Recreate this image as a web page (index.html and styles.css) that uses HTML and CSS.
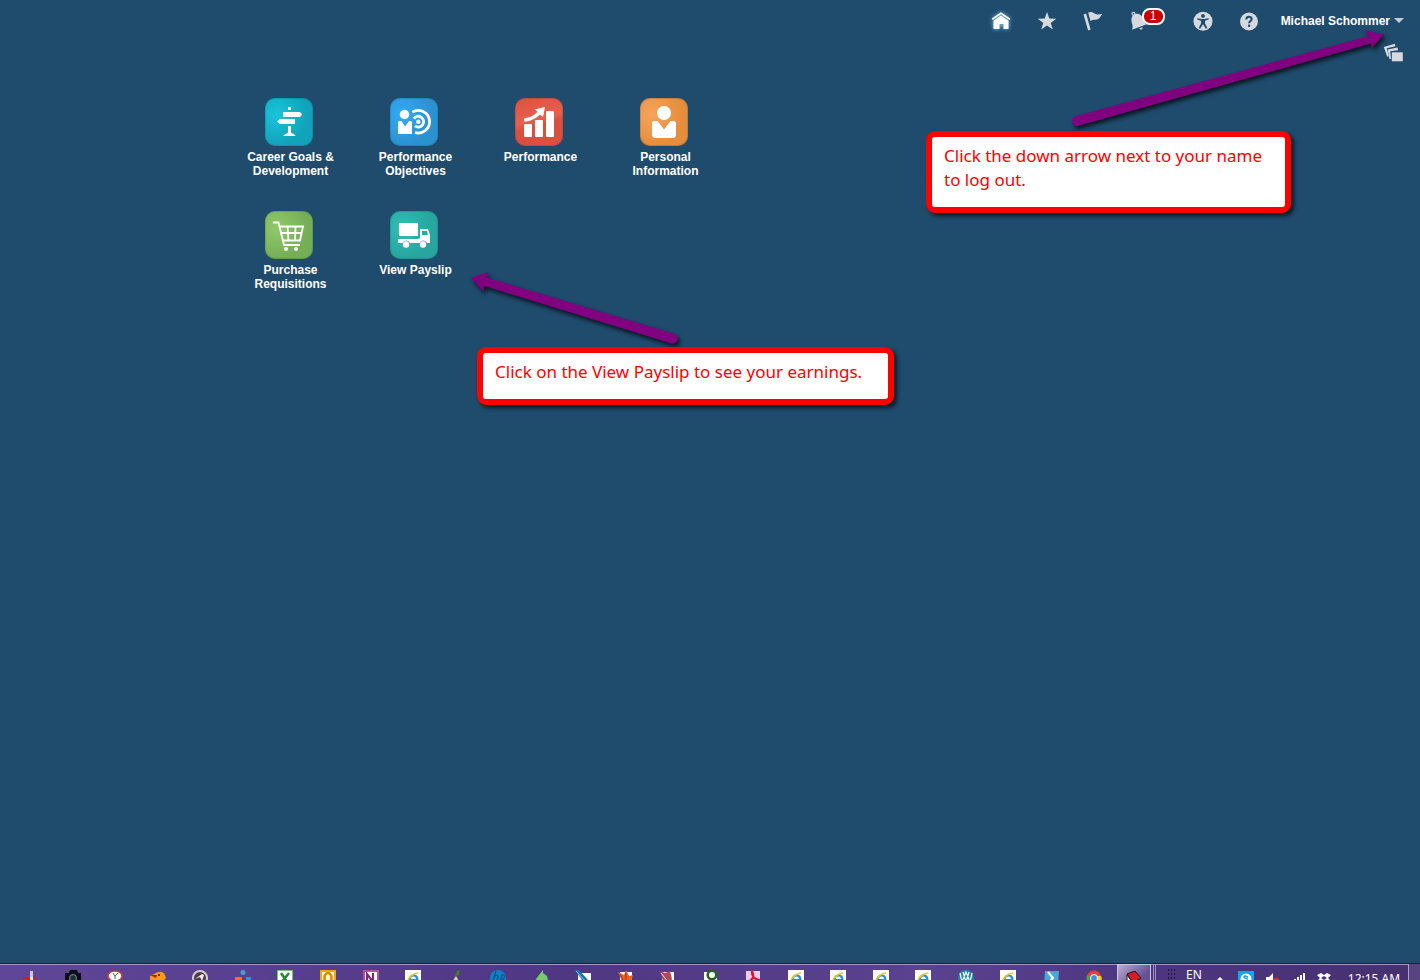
FILE: index.html
```html
<!DOCTYPE html>
<html lang="en">
<head>
<meta charset="utf-8">
<title>Springboard</title>
<link rel="stylesheet" href="styles.css">
</head>
<body>
<svg class="defs" aria-hidden="true">
  <symbol id="ie" viewBox="0 0 16 16">
    <path fill="#fff" d="M0 0h16v16H0z"/>
    <path d="M4.500 10h8c0-6-7.500-6-8 0 0 5 6 5 7.500 2" fill="none" stroke="#2b8fd6" stroke-width="2.200"/>
    <path d="M3 12C2 9 8 3 13 3" fill="none" stroke="#f2c70c" stroke-width="1.600"/>
  </symbol>
</svg>
<header class="topbar">
  <nav class="tools" aria-label="Global">
    <button class="tool tool-home" aria-label="Home"><svg viewBox="0 0 20 20" fill="#fff"><path d="M.8 7.600 10 1.200l9.200 6.400-.9 1.300L10 3.200 1.700 8.900z"/><path d="M2.500 9.800 10 4.600l7.500 5.200V18h-5v-5h-4v5h-6z"/></svg></button>
    <button class="tool" aria-label="Favorites"><svg viewBox="0 0 20 20" fill="#d6d9df"><path d="m10 1 2.300 6.600 7 .1-5.600 4.200 2.100 6.700L10 14.600l-5.800 4 2.100-6.700L.7 7.700l7-.1z"/></svg></button>
    <button class="tool" aria-label="Watchlist"><svg viewBox="0 0 20 20" fill="#d6d9df"><path d="m.5 3.600 2.600-1 4.500 16-2.500.8zM5.200 1.500c4-2 6.300 1.700 9.300 1.900 1.800.1 3.400-.5 4.800-.7-1.600 1.600-2 4.600-4.500 5.600-2.500 1-4.800-.2-7.400 1.700z"/></svg></button>
    <button class="tool tool-bell" aria-label="Notifications"><svg viewBox="0 0 20 20"><circle cx="4.500" cy="2.800" r="1.500" fill="none" stroke="#d6d9df" stroke-width="1.200"/><path fill="#d6d9df" d="M4.500 3.800C9 1 13.500 4 14.500 9c.5 2.500 1.200 3.500 3.200 4.300L3 18.800C3.800 16.500 3.900 15 3 12.500 2 9 2.200 6 4.500 3.800zM10 17.500l3.500-1.300c.4 2.200-1.800 3.200-3.500 1.300z"/></svg><span class="count">1</span></button>
    <button class="tool" aria-label="Accessibility"><svg viewBox="0 0 20 20"><circle cx="10" cy="10.200" r="9.500" fill="#d6d9df"/><g fill="#1f4b6d"><circle cx="10" cy="5" r="1.900"/><path d="M4.300 7.200 8.500 8h3l4.200-.8v1.400L12 9.800v2.700l2.300 4.500-1.400.7L10 13.200l-2.900 4.500-1.400-.7L8 12.500V9.800L4.300 8.600z"/></g></svg></button>
    <button class="tool" aria-label="Help"><svg viewBox="0 0 20 20"><circle cx="10" cy="10.500" r="9" fill="#d6d9df"/><path d="M7.300 8.500c0-3.600 5.400-3.500 5.400-.4 0 2-2.600 2-2.600 4.200" fill="none" stroke="#1f4b6d" stroke-width="2"/><path d="M9 13.600h2.200v2.200H9z" fill="#1f4b6d"/></svg></button>
  </nav>
  <button class="user">Michael Schommer<span class="caret"></span></button>
</header>
<div class="subbar">
  <button class="tool" aria-label="Recent pages"><svg viewBox="0 0 20 20" fill="#d6d9df"><path d="m.8 4 11-3.200.6 2.400-8.600 2 2 8-1.600.5z"/><path d="m4.600 6.500 10-2 .4 2.700-7.800 1 .8 7.800-1.600.1z"/><path d="M8.800 9.300h11v9h-11z"/></svg></button>
</div>
<main class="springboard">
  <a class="tile" href="#"><span class="icon cyan"><svg viewBox="0 0 48 48" fill="#fff"><path d="M23 9h3v3h-3zM18 14h17l2 2.500-2 2.500H18zM30 21v5H15l-3-2.500 3-2.500zM23 28h3v6.500c1 1.300 3 1.200 5 3.500H18c2-2.300 4-2.200 5-3.500z"/></svg></span>Career Goals &amp;<br>Development</a>
  <a class="tile" href="#"><span class="icon blue"><svg viewBox="0 0 48 48"><g fill="none" stroke="#fff" stroke-width="2.800"><path d="M22.300 14.100A11.300 11.300 0 1 1 25 34.500"/><path d="M23.800 20.600A5.400 5.400 0 1 1 25 28"/></g><circle cx="28.300" cy="23.700" r="2.200" fill="#fff"/><circle cx="14.500" cy="16.500" r="4.700" fill="#fff"/><path fill="#fff" d="M9 23h2.500l3.500 5.500 4-5.500h2l1 1v12H8V24z"/></svg></span>Performance<br>Objectives</a>
  <a class="tile" href="#"><span class="icon red"><svg viewBox="0 0 48 48" fill="#fff"><rect x="9" y="26" width="8" height="13" rx="1"/><rect x="20" y="22" width="8" height="17" rx="1"/><rect x="31" y="13" width="8" height="26" rx="1"/><path d="M9 20.500c6-1 10-3 13.500-7l-3-2L30 9l-2 10-3-2.500c-4 4-9 6.500-15.500 7.300z"/></svg></span>Performance</a>
  <a class="tile" href="#"><span class="icon orange"><svg viewBox="0 0 48 48" fill="#fff"><circle cx="24" cy="15" r="7"/><path d="M13.500 23h4L24 31.500 30.500 23h4l1.500 1.500V38l-2 2H14l-2-2V24.500z"/></svg></span>Personal<br>Information</a>
  <a class="tile" href="#"><span class="icon green"><svg viewBox="0 0 48 48" fill="none" stroke="#fff" stroke-width="1.800"><path d="M8 11.500h5.500L19 34h16"/><path d="M15 15.500h23L35 29.500H18M16 22h20.500M22.500 15.500l1 14M30.500 15.500l-.5 14"/><g fill="#fff" stroke="none"><circle cx="21" cy="38" r="2"/><circle cx="31" cy="38" r="2"/></g></svg></span>Purchase<br>Requisitions</a>
  <a class="tile" href="#"><span class="icon teal"><svg viewBox="0 0 48 48"><path fill="#fff" d="M9 12h19v13H9zM8 28h20l2-1V18h8l2 6v8h-3a4 4 0 0 0-7.500 0H20a4 4 0 0 0-7.500 0H8z"/><path fill="#2aa9a2" d="M32 20h5l1 4h-6z"/><circle cx="16" cy="33.500" r="3.200" fill="#fff"/><circle cx="33" cy="33.500" r="3.200" fill="#fff"/></svg></span>View Payslip</a>
</main>

<svg class="arrow arrow-user" viewBox="0 0 330 110" aria-hidden="true"><path fill="#800080" d="M15.500 86.200 309 6 304 0l20 4.500-12 13.500-1-4.500L18.500 95.800A5 5 0 0 1 15.500 86.200z"/></svg>
<p class="callout callout-user">Click the down arrow next to your name<br>to log out.</p>
<svg class="arrow arrow-payslip" viewBox="0 0 220 85" aria-hidden="true"><path fill="#800080" d="M.7 7.700 19 2l-2.500 5.500 187.500 56.300a5 5 0 0 1-2.500 9.700L14.500 16l-1 5.500z"/></svg>
<p class="callout callout-payslip">Click on the View Payslip to see your earnings.</p>

<footer class="taskbar">
  <div class="apps">
    <button aria-label="Launcher"><svg viewBox="0 0 16 16"><path d="M8 1h3v6H8z" fill="#c9c9cf"/><path d="M0 10q4-4 7-3h3q4 0 6 3v6H0z" fill="#c91f1f"/><path d="M8 7h3v3H8z" fill="#eee"/></svg></button>
    <button aria-label="Camera"><svg viewBox="0 0 16 16"><path d="M0 3h4l1-3h7l1 3h3v13H0z" fill="#0b0b10"/><circle cx="8" cy="8" r="3.500" fill="#222c36" stroke="#7b8d98"/></svg></button>
    <button aria-label="Clock"><svg viewBox="0 0 16 16"><ellipse cx="8" cy="6" rx="7" ry="5" fill="#fff" stroke="#d43d2a" stroke-width="1.500"/><path d="m6 3 2 3 3-3M8 6v3" stroke="#555" fill="none"/><path d="M2 10h6v6H2z" fill="#eee"/></svg></button>
    <button aria-label="Bird"><svg viewBox="0 0 16 16"><path d="M0 6 6 3q8-4 10 5l-4 4L0 10z" fill="#f79b18"/><path d="m0 5 7 0-1 3z" fill="#b71914"/><circle cx="9" cy="5" r="1" fill="#222"/></svg></button>
    <button aria-label="Gauge"><svg viewBox="0 0 16 16"><circle cx="8" cy="8" r="7" fill="#503c48" stroke="#cfcfcf" stroke-width="2"/><path d="m3 9 7-5 2 1-2 6-2-4z" fill="#eee"/></svg></button>
    <button aria-label="Team"><svg viewBox="0 0 16 16"><circle cx="8" cy="2.500" r="2.500" fill="#3aa1dc"/><path d="M0 7h7v9H0z" fill="#ef7125"/><path d="M11 7h5v9h-5z" fill="#2998d4"/></svg></button>
    <button aria-label="Excel"><svg viewBox="0 0 16 16"><path d="M.5.500h15V16H.5z" fill="#fff" stroke="#7fbf7a"/><path d="m4 3 7 10M12 3 4 13" stroke="#268735" stroke-width="2.500"/></svg></button>
    <button aria-label="Outlook"><svg viewBox="0 0 16 16"><path d="M1 1h14v15H1z" fill="#fff4cc" stroke="#f0a916" stroke-width="2"/><ellipse cx="8" cy="8" rx="3.500" ry="5" fill="none" stroke="#db8700" stroke-width="2.500"/></svg></button>
    <button aria-label="OneNote"><svg viewBox="0 0 16 16"><path d="M1 1h14v15H1z" fill="#fff" stroke="#b550a7" stroke-width="2"/><path d="M4 13V4l6 8V3" fill="none" stroke="#7e2874" stroke-width="2.200"/></svg></button>
    <button aria-label="Internet Explorer"><svg><use href="#ie"/></svg></button>
    <button aria-label="Pear"><svg viewBox="0 0 16 16"><path d="M4 16q0-5 4-10l3 5 2 5z" fill="#d9d49a"/><path d="m7 6 2-5 3-1-1 5z" fill="#467c27"/></svg></button>
    <button aria-label="HP"><svg viewBox="0 0 16 16"><circle cx="8" cy="8" r="8" fill="#0b83c9"/><path d="m6 1-3 10M5 6q4-2 3 1l-1 4M12 5l-3 10M11 5q5-1 3 3-2 3-4 2" fill="none" stroke="#263d75"/></svg></button>
    <button aria-label="Leaf"><svg viewBox="0 0 16 16"><path d="M1 12Q5 6 10 0l0 3 4 3 2 8-3-4-3 6H5l2-5-4 3z" fill="#75cb69"/></svg></button>
    <button aria-label="Notes"><svg viewBox="0 0 16 16"><path d="M3 3h13v13H3z" fill="#fff"/><path d="M0 0h4l9 10H7z" fill="#1874ad"/><path d="m1 1 11 12" stroke="#75c9ef"/></svg></button>
    <button aria-label="Maple"><svg viewBox="0 0 16 16"><path d="M2 2h12v14H2z" fill="#fff"/><path d="m0 2 6 3 2-5 3 6 4-1-3 11H6z" fill="#e96222"/><path d="m2 4 5 10M8 3v10" stroke="#a72e16"/></svg></button>
    <button aria-label="Editor"><svg viewBox="0 0 16 16"><path d="M2 2h12v14H2z" fill="#fff"/><path d="m0 1 5 2 5-2 2 8-4 5-5-3z" fill="#b64756"/><path d="m1 3 7 9" stroke="#eee"/></svg></button>
    <button aria-label="Ring"><svg viewBox="0 0 16 16"><path d="M1 2h13v14H1z" fill="#fff"/><circle cx="9" cy="5" r="4.300" fill="#fff" stroke="#27651e" stroke-width="2.500"/></svg></button>
    <button aria-label="PDF Reader"><svg viewBox="0 0 16 16"><path d="M1 1h14v15H1z" fill="#eaccef"/><path d="M2 12Q11 9 7 1q-1 8 8 9" fill="none" stroke="#dc1431" stroke-width="2"/></svg></button>
    <button aria-label="Internet Explorer"><svg><use href="#ie"/></svg></button>
    <button aria-label="Internet Explorer"><svg><use href="#ie"/></svg></button>
    <button aria-label="Internet Explorer"><svg><use href="#ie"/></svg></button>
    <button aria-label="Internet Explorer"><svg><use href="#ie"/></svg></button>
    <button aria-label="Malware scanner"><svg viewBox="0 0 16 16"><circle cx="8" cy="8" r="8" fill="#158baa"/><path d="m2 3 2 9 4-10 4 10 2-9M5 2l3 10 3-10" fill="none" stroke="#fff" stroke-width="1.200"/></svg></button>
    <button aria-label="Internet Explorer"><svg><use href="#ie"/></svg></button>
    <button aria-label="PowerShell"><svg viewBox="0 0 16 16"><path d="M2 1h14l-1 15H1z" fill="#49a6d6"/><path d="m5 2 5 6-5 5" fill="none" stroke="#fff" stroke-width="2"/></svg></button>
    <button aria-label="Chrome"><svg viewBox="0 0 16 16"><circle cx="8" cy="8" r="7.500" fill="#e44236"/><path d="M1 5q-2 7 6 11V8z" fill="#46a346"/><path d="M9 6h6q3 6-6 10z" fill="#f8cb24"/><circle cx="8" cy="8" r="3.500" fill="#438ce8" stroke="#fff"/></svg></button>
  </div>
  <button class="active" aria-label="Snagit"><svg viewBox="0 0 16 16"><path d="m1 3 8-3 6 7-8 5z" fill="#d41d25" stroke="#191018"/><path d="m1 4 6 8v4H4L1 8z" fill="#fff" stroke="#222"/></svg></button>
  <div class="tray">
    <span class="grip"></span>
    <span class="lang">EN</span>
    <button aria-label="Show hidden icons"><svg viewBox="0 0 16 16"><path d="m4 11 4-4 4 4z" fill="#fff"/></svg></button>
    <button aria-label="Skype"><svg viewBox="0 0 16 16"><path d="M0 1h16v15H0z" fill="#12a5f4"/><circle cx="8" cy="9" r="5.500" fill="#fff"/><path d="M10 7q-4-2-4 0 0 1 4 2" stroke="#12a5f4" stroke-width="1.500" fill="none"/></svg></button>
    <button aria-label="Volume"><svg viewBox="0 0 16 16"><path d="M2 7h3l4-4v13l-4-4H2z" fill="#fff"/><circle cx="12" cy="11" r="3.500" fill="#d8282b"/><path d="m10 10 4 3" stroke="#fff"/></svg></button>
    <button aria-label="Network"><svg viewBox="0 0 16 16" fill="#fff"><path d="M13 3h2v13h-2zM10 5h2v11h-2zM7 7h2v9H7zM4 9h2v7H4z"/></svg></button>
    <button aria-label="Dropbox"><svg viewBox="0 0 16 16" fill="#fff"><path d="m1 5 4-2 3 2 3-2 4 2-3 3 3 3-4 2-3-2-3 2-4-2 3-3zm3 7 4 3 4-3v3l-4 2-4-2z"/><path fill="#493277" d="m5 8 3-2 3 2-3 2z"/></svg></button>
    <time class="clock">12:15 AM</time>
  </div>
  <button class="desktop" aria-label="Show desktop"></button>
</footer>
</body>
</html>
```
FILE: styles.css
```css
* { box-sizing: border-box; }

body {
  position: relative;
  display: flex;
  flex-direction: column;
  min-height: 100vh;
  margin: 0;
  overflow-x: hidden;
  background: #1f4b6d;
  color: #fff;
  font-family: "Liberation Sans", Arial, sans-serif;
  font-size: 12px;
}

button {
  padding: 0;
  border: 0;
  background: none;
  color: inherit;
  font: inherit;
}

svg { display: block; }
.defs { position: absolute; width: 0; height: 0; }

.topbar {
  display: flex;
  justify-content: flex-end;
  align-items: center;
  gap: 22px;
  height: 41px;
  padding-right: 16px;
}

.tools { display: flex; gap: 26px; }
.tool svg { width: 20px; height: 20px; }
.tool-home { filter: drop-shadow(0 0 2px #8fd0f5); }

.tool-bell { position: relative; width: 38px; }

.count {
  position: absolute;
  top: -3px;
  right: 2px;
  width: 23px;
  height: 17px;
  border: 2px solid #fff;
  border-radius: 8px;
  background: #c80000;
  line-height: 13px;
}

.user {
  display: flex;
  align-items: center;
  gap: 4px;
  font-weight: bold;
}

.caret {
  border: 5px solid transparent;
  border-top-color: #c5cdd6;
  border-bottom: 0;
}

.subbar {
  display: flex;
  justify-content: flex-end;
  padding: 2px 17px 0 0;
}

.springboard {
  flex: 1;
  display: grid;
  grid-template-columns: repeat(4, 125px);
  align-content: start;
  gap: 33px 0;
  padding: 35px 0 32px 228px;
}

.tile {
  color: #fff;
  font-weight: bold;
  line-height: 14px;
  text-align: center;
  text-decoration: none;
}

.icon {
  display: block;
  width: 48px;
  height: 48px;
  margin: 0 0 4px 37px;
  border-radius: 10px;
  box-shadow: inset 0 0 0 1px rgb(0 60 80 / 18%);
}

.cyan { background: radial-gradient(circle at 25% 35%, #19c4dc, #12a2b9 65%); }
.blue { background: radial-gradient(circle at 25% 35%, #34aaf6, #2b91cf 65%); }
.red { background: linear-gradient(165deg, #e0503e, #e6604f 45%, #d95040 55%); }
.orange { background: radial-gradient(circle at 25% 35%, #f6a45c, #e68d3b 65%); }
.green { background: radial-gradient(circle at 25% 35%, #8fca68, #76ad57 65%); }
.teal { background: radial-gradient(circle at 25% 35%, #31bcb5, #28a59f 65%); }

.callout {
  position: absolute;
  margin: 0;
  padding: 7px 12px 15px;
  border: 6px solid #f00;
  border-radius: 9px;
  background: #fff;
  box-shadow: 3px 3px 4px #000a;
  color: #f00;
  font: 17px/24px "Noto Sans", "Open Sans", sans-serif;
}

.callout-user { top: 131px; left: 926px; width: 365px; }
.callout-payslip { top: 347px; left: 477px; width: 417px; }

.arrow { position: absolute; overflow: visible; filter: drop-shadow(2px 3px 2px #000b); }
.arrow-user { top: 30px; left: 1060px; width: 330px; }
.arrow-payslip { top: 270px; left: 470px; width: 220px; }

.taskbar {
  display: flex;
  height: 17px;
  overflow: hidden;
  border-top: 1px solid #211d3d;
  background: linear-gradient(90deg, #604698, #503784 40%, #5b4290 65%, #4d3680 80%, #46316f);
  box-shadow: inset 0 1px #a795c8;
}

.apps { display: flex; flex: 1; padding-left: 9px; }
.apps button { flex: 1; height: 22px; padding-top: 6px; }
.taskbar svg { width: 16px; height: 16px; margin: 0 auto; }

.active {
  width: 34px;
  height: 22px;
  margin: 0 2px;
  padding-top: 6px;
  border: 1px solid #cfc6e2;
  border-bottom: 0;
  background: linear-gradient(135deg, #b9aed2, #665094 70%);
}

.tray {
  display: flex;
  width: 255px;
  gap: 10px;
  padding-left: 11px;
  border-left: 3px double #a090bd;
}

.tray button { height: 22px; padding-top: 5px; }

.grip {
  width: 9px;
  height: 11px;
  margin: 4px 0 0;
  background: radial-gradient(circle, #1f1636 1px, transparent 1px) 0 0 / 3px 4px;
}

.lang, .clock { font: 12px/12px "Noto Sans", sans-serif; }
.lang { height: 12px; margin-top: 5px; }
.clock { padding: 9px 0 0 6px; white-space: nowrap; }

.desktop {
  width: 12px;
  border-left: 1px solid #b0a2cc;
  background: #58447f;
}
```
